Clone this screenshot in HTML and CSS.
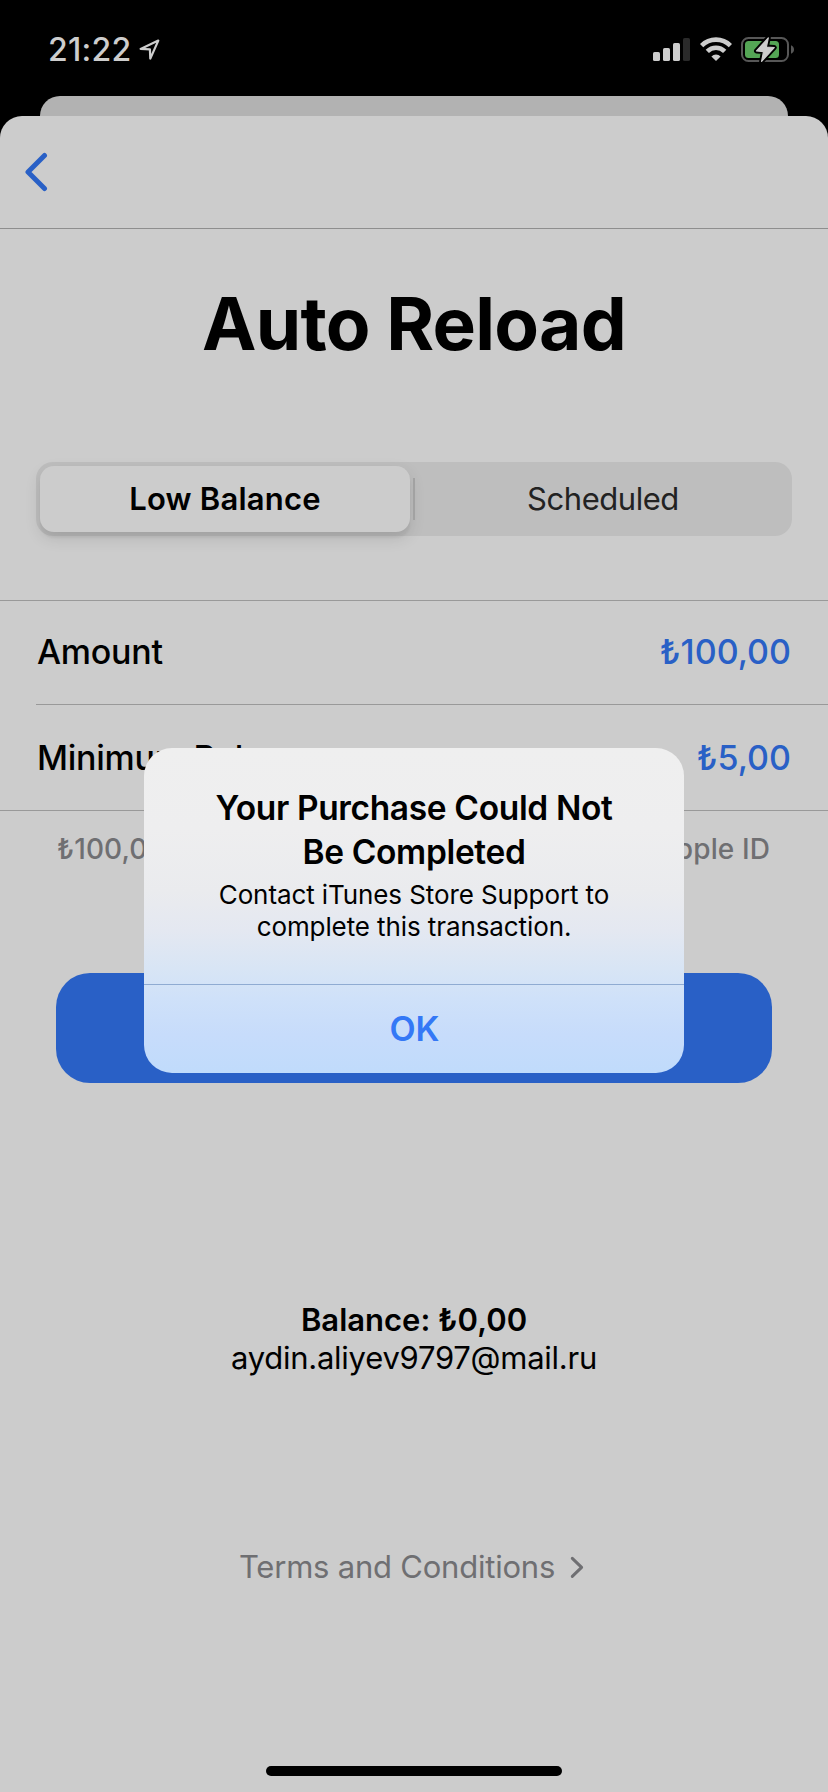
FILE: index.html
```html
<!DOCTYPE html>
<html lang="en">
<head>
<meta charset="utf-8">
<title>Auto Reload</title>
<link rel="stylesheet" href="styles.css">
</head>
<body>
<div class="screen">
  <header class="status">
    <div class="status-left">
      <span class="time">21:22</span>
      <svg class="location" width="22" height="22" viewBox="0 0 22 22"><path d="M1.6 9.9 L19.3 1.6 L11.3 19.6 L10.9 10.4 Z" fill="none" stroke="#cdcdcd" stroke-width="2.2" stroke-linejoin="round"/></svg>
    </div>
    <div class="status-right">
      <svg width="37" height="26" viewBox="0 0 37 26"><g fill="#cdcdcd"><rect y="15" width="7" height="9" rx="1.6"/><rect x="10" y="11" width="7" height="13" rx="1.6"/><rect x="20" y="6" width="7" height="18" rx="1.6"/></g><rect x="30" y="1" width="7" height="23" rx="1.6" fill="#2a2a2a"/></svg>
      <svg width="32" height="26" viewBox="0 0 32 26"><g fill="none" stroke="#cdcdcd" stroke-width="4.6"><path d="M1.6 8.6 A20.4 20.4 0 0 1 30.4 8.6"/><path d="M7.3 14.4 A12.3 12.3 0 0 1 24.7 14.4"/></g><path d="M16 24 L11.4 19.4 A6.5 6.5 0 0 1 20.6 19.4 Z" fill="#cdcdcd"/></svg>
      <svg class="battery" width="54" height="28" viewBox="0 0 54 28"><rect x="1" y="2" width="46" height="23" rx="6.5" fill="none" stroke="#575757" stroke-width="2"/><path d="M50 9.2 Q53 10.5 53 13.5 Q53 16.5 50 17.8 Z" fill="#575757"/><rect x="4" y="5" width="34" height="17" rx="3.5" fill="#54a555"/><path d="M27.3 1.8 L15.5 15 L22.5 15.6 L20.6 25.4 L33.2 11.5 L25.4 11 Z" fill="#cdcdcd" stroke="#000" stroke-width="5" stroke-linejoin="round"/><path d="M27.3 1.8 L15.5 15 L22.5 15.6 L20.6 25.4 L33.2 11.5 L25.4 11 Z" fill="#cdcdcd" stroke="#cdcdcd" stroke-width="1.2" stroke-linejoin="round"/></svg>
    </div>
  </header>
  <div class="back-sheet"></div>
  <main class="sheet">
    <nav class="navbar"><svg width="24" height="40" viewBox="0 0 24 40"><path d="M20.5 3.5 L4 20 L20.5 36.5" fill="none" stroke="#2960c6" stroke-width="5" stroke-linecap="round" stroke-linejoin="round"/></svg></nav>
    <h1 class="title">Auto Reload</h1>
    <div class="segments">
      <div class="segment selected"><span>Low Balance</span></div>
      <div class="separator"></div>
      <div class="segment"><span>Scheduled</span></div>
    </div>
    <div class="list">
      <div class="row first"><span class="label">Amount</span><span class="value">₺100,00</span></div>
      <div class="row"><span class="label">Minimum Balance</span><span class="value">₺5,00</span></div>
    </div>
    <div class="note"><span>₺100,00</span><span>Apple ID</span></div>
    <div class="primary"></div>
    <div class="account">
      <div class="balance">Balance: ₺0,00</div>
      <div class="email">aydin.aliyev9797@mail.ru</div>
    </div>
    <div class="terms"><span>Terms and Conditions</span><svg width="16" height="24" viewBox="0 0 16 24"><path d="M3.3 3.4 L12.6 12.4 L3.3 21.4" fill="none" stroke="#6f6f72" stroke-width="3" stroke-linecap="round" stroke-linejoin="round"/></svg></div>
    <div class="home"></div>
  </main>
  <div class="alert">
    <div class="alert-body">
      <h2 class="alert-title">Your Purchase Could Not<br>Be Completed</h2>
      <p class="alert-text">Contact iTunes Store Support to<br>complete this transaction.</p>
    </div>
    <div class="alert-action">OK</div>
  </div>
</div>
</body>
</html>
```
FILE: styles.css
```css
* { box-sizing: border-box; }
body { margin: 0; background: #000; font-family: Inter, "Liberation Sans", sans-serif; color: #000; }
h1, h2, p { margin: 0; }
svg { display: block; flex: none; }
span { white-space: nowrap; }
.screen { position: relative; width: 828px; height: 1792px; overflow: hidden; display: flex; flex-direction: column; }
.status { height: 96px; flex: none; display: flex; justify-content: space-between; padding: 0 33px 0 48px; }
.status-left { display: flex; align-items: flex-start; gap: 7px; padding-top: 30px; }
.time { font-size: 32px; line-height: 40px; font-weight: 500; color: #cdcdcd; letter-spacing: .3px; }
.location { margin-top: 9px; }
.status-right { display: flex; align-items: flex-start; gap: 10px; padding-top: 37px; }
.battery { margin: -1px 0 0 -1px; }
.back-sheet { height: 20px; flex: none; margin: 0 40px; background: #b2b2b2; border-radius: 20px 20px 0 0; }
.sheet { flex: 1; background: #ccc; border-radius: 22px 22px 0 0; display: flex; flex-direction: column; }
.navbar { height: 113px; flex: none; border-bottom: 1px solid #8e8e8e; padding: 36px 0 0 24px; }
.title { margin-top: 51px; font-size: 73px; line-height: 88px; font-weight: 700; text-align: center; letter-spacing: -.75px; }
.segments { margin: 94px 36px 0; height: 74px; flex: none; display: flex; align-items: center; padding: 4px; border-radius: 17px; background: #bebebe; font-size: 31px; line-height: 40px; }
.segment { flex: 1; height: 66px; display: flex; align-items: center; justify-content: center; padding-left: 3px; color: #222; letter-spacing: -.45px; }
.segment.selected { flex: none; width: 370px; padding: 0; background: #ccc; border-radius: 14px; font-weight: 600; color: #000; letter-spacing: .2px; box-shadow: 0 6px 16px rgba(0,0,0,.12), 0 6px 2px rgba(0,0,0,.04); }
.separator { width: 2px; height: 42px; margin-left: 3px; background: #a2a2a2; }
.list { margin-top: 64px; flex: none; border-top: 1px solid #999; border-bottom: 1px solid #999; font-size: 34px; }
.row { height: 105px; margin-left: 36px; padding: 0 37px 0 1px; display: flex; align-items: center; justify-content: space-between; }
.row.first { height: 104px; padding-bottom: 2px; border-bottom: 1px solid #999; }
.label { font-weight: 500; letter-spacing: -.25px; }
.value { font-weight: 500; color: #2960c6; letter-spacing: 0; }
.note { margin: 18px 58px 0 57px; display: flex; justify-content: space-between; font-size: 28px; line-height: 40px; font-weight: 500; letter-spacing: .1px; color: #6f6f72; }
.primary { margin: 104px 56px 0; height: 110px; flex: none; border-radius: 34px; background: #2960c6; }
.account { margin-top: 218px; text-align: center; font-size: 31px; line-height: 38px; }
.balance { font-weight: 600; }
.email { letter-spacing: -.25px; }
.terms { margin-top: 171px; padding-left: 239px; display: flex; align-items: center; gap: 14px; font-size: 31px; line-height: 38px; letter-spacing: -.22px; color: #6f6f72; }
.home { width: 296px; height: 10px; margin: 180px auto 0; border-radius: 5px; background: #000; }
.alert { position: absolute; left: 144px; top: 748px; width: 540px; height: 325px; border-radius: 28px; overflow: hidden; text-align: center; background: linear-gradient(#efefef 0%, #eeeeef 25%, #eaebee 44%, #e4e8f1 56%, #d8e5f5 68%, #cfe1f9 77%, #c7dcfb 88%, #c0dbfb 100%); }
.alert-body { height: 237px; padding-top: 38px; border-bottom: 1px solid #8fabd2; }
.alert-title { font-size: 33.5px; line-height: 44px; font-weight: 600; letter-spacing: -.35px; }
.alert-text { font-size: 26px; line-height: 32px; margin-top: 5px; letter-spacing: -.1px; }
.alert-action { height: 88px; padding-left: 1px; line-height: 88px; font-size: 34px; font-weight: 600; color: #3478f6; }
```
